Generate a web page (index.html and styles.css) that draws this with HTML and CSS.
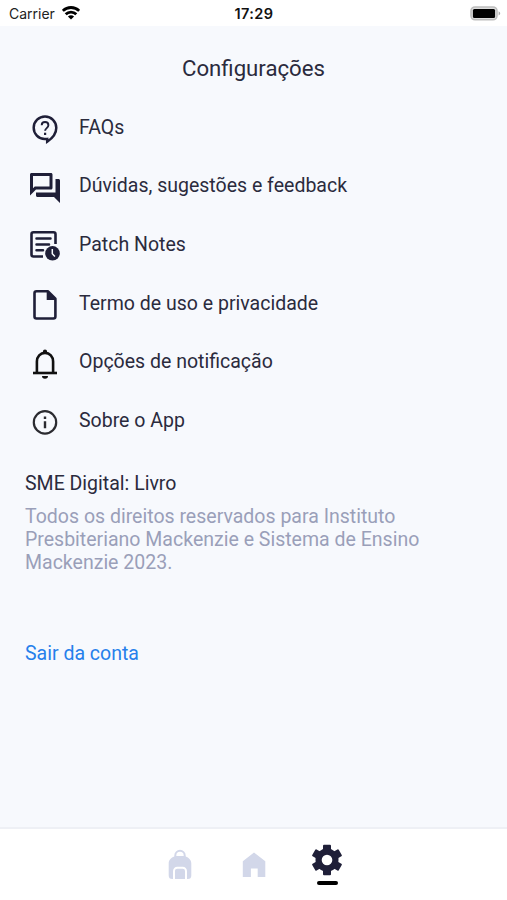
FILE: index.html
```
<!DOCTYPE html>
<html lang="pt-BR">
<head>
  <meta charset="UTF-8">
  <meta name="viewport" content="width=device-width, initial-scale=1.0">
  <title>Configurações</title>
  <link rel="stylesheet" href="styles.css">
</head>
<body>
  <header class="status-bar">
    <div class="carrier">
      <span>Carrier</span>
      <svg width="18" height="14" viewBox="0 0 18 14" fill="none" stroke="#000" stroke-width="2.8">
        <path d="M0.8 4.8a11.8 11.8 0 0 1 16.4 0"/>
        <path d="M3.7 8.3a7.5 7.5 0 0 1 10.6 0"/>
        <path d="M9 13.6L5.9 10.6a4.5 4.5 0 0 1 6.2 0z" fill="#000" stroke="none"/>
      </svg>
    </div>
    <time class="clock">17:29</time>
    <svg class="battery" width="31" height="15" viewBox="0 0 31 15">
      <rect x="1" y="1" width="26" height="12.8" rx="4" fill="#ddd" stroke="#bdbdbd" stroke-width="1.6"/>
      <rect x="2.9" y="2.9" width="22.2" height="9" rx="1.5" fill="#000"/>
      <path d="M28.6 5.3c2.2 1 2.2 3.2 0 4.2z" fill="#a8a8a8"/>
    </svg>
  </header>

  <main class="content">
    <h1 class="title">Configurações</h1>

    <ul class="menu">
      <li class="menu-item">
        <svg class="icon" viewBox="0 0 36 36" fill="none" stroke="#1f1f38" stroke-width="2.5">
          <path d="M20.2 27.9l-2.5.2A11.3 11.3 0 1 1 29.3 16.8c0 5.8-4 10.6-9.1 13.9z"/>
          <path d="M14.7 14.2c0-4.3 6.7-4.3 6.7 0 0 2.9-3.3 2.9-3.3 5.6" stroke-width="1.9"/>
          <path d="M18.1 21.7v2.3" stroke-width="2.2"/>
        </svg>
        <span>FAQs</span>
      </li>
      <li class="menu-item">
        <svg class="icon" viewBox="0 0 24 24" fill="#1f1f38">
          <path d="M15 4v7H5.17L4 12.17V4h11m1-2H3c-.55 0-1 .45-1 1v14l4-4h10c.55 0 1-.45 1-1V3c0-.55-.45-1-1-1zm5 4h-2v9H6v2c0 .55.45 1 1 1h11l4 4V7c0-.55-.45-1-1-1z"/>
        </svg>
        <span>Dúvidas, sugestões e feedback</span>
      </li>
      <li class="menu-item">
        <svg class="icon" viewBox="0 0 36 36" fill="none" stroke="#1f1f38" stroke-width="2.6">
          <path d="M16 28.5H6.5a2 2 0 0 1-2-2V6.3a2 2 0 0 1 2-2h20a2 2 0 0 1 2 2V16"/>
          <path d="M9.5 10.5h14M9.5 16.4h12.5M9.5 22.3h6.5" stroke-width="2.5" stroke-linecap="round"/>
          <circle cx="25.5" cy="25.3" r="7.3" fill="#1f1f38" stroke="none"/>
          <path d="M25.3 21v4.7l2.6 2.7" stroke="#f7f9fd" stroke-width="1.5"/>
        </svg>
        <span>Patch Notes</span>
      </li>
      <li class="menu-item">
        <svg class="icon" viewBox="0 0 36 36" fill="none" stroke="#1f1f38" stroke-width="2.6">
          <path d="M9.5 4.3h11.3l7.6 7.5v17.7a2 2 0 0 1-2 2H9.5a2 2 0 0 1-2-2V6.300a2 2 0 0 1 2-2z" stroke-linejoin="round"/>
          <path d="M19.7 4v9h9z" fill="#1f1f38" stroke="none"/>
        </svg>
        <span>Termo de uso e privacidade</span>
      </li>
      <li class="menu-item">
        <svg class="icon" viewBox="0 0 36 36" fill="none" stroke="#111" stroke-width="2.6">
          <path d="M6 27h24"/>
          <path d="M9.9 27V15.5c0-5 3.4-8.6 8.1-8.6s8.1 3.6 8.1 8.6V27"/>
          <path d="M15.9 7V5.5a2.1 2.1 0 0 1 4.2 0V7zM15 30h6a3 2.7 0 0 1-6 0z" fill="#111" stroke="none"/>
        </svg>
        <span>Opções de notificação</span>
      </li>
      <li class="menu-item">
        <svg class="icon" viewBox="0 0 36 36" fill="none" stroke="#2b2b30" stroke-width="2.2">
          <circle cx="18" cy="18.4" r="11.2"/>
          <path d="M18 17.2v7M18 12.600v2.300" stroke-width="2.4"/>
        </svg>
        <span>Sobre o App</span>
      </li>
    </ul>

    <section class="about">
      <h2 class="about-title">SME Digital: Livro</h2>
      <p class="about-text">Todos os direitos reservados para Instituto Presbiteriano Mackenzie e Sistema de Ensino Mackenzie 2023.</p>
    </section>

    <a class="logout" href="#">Sair da conta</a>
  </main>

  <nav class="tab-bar">
    <a class="tab" href="#" aria-label="Mochila">
      <svg width="26" height="32" viewBox="0 0 26 32">
        <path d="M8.3 9V7.5a4.7 4.7 0 0 1 9.4 0V9" fill="none" stroke="#d2d7e9" stroke-width="2"/>
        <path d="M9 8h8c4.3 1 7.3 3.5 7.3 7.5v12a3.5 3.5 0 0 1-3.5 3.5H5.2a3.5 3.5 0 0 1-3.5-3.5v-12C1.700 11.500 4.700 9 9 8z" fill="#d2d7e9"/>
        <path d="M7 31v-8a3.3 3.3 0 0 1 3.3-3.3h5.4A3.3 3.3 0 0 1 19 23v8" fill="none" stroke="#fff" stroke-width="2"/>
      </svg>
    </a>
    <a class="tab" href="#" aria-label="Início">
      <svg width="26" height="32" viewBox="0 0 26 32">
        <path d="M13 4.5l11.3 8.8V29h-7.6v-8.5H9.9V29H1.8V13.3z" fill="#d2d7e9"/>
      </svg>
    </a>
    <a class="tab tab-active" href="#" aria-label="Configurações">
      <svg width="38" height="38" viewBox="-19 -19 38 38" fill="#1f1f38">
        <circle r="11.5"/>
        <rect x="-4" y="-15.3" width="8" height="30.6" rx="1"/>
        <rect x="-4" y="-15.3" width="8" height="30.6" rx="1" transform="rotate(60)"/>
        <rect x="-4" y="-15.3" width="8" height="30.6" rx="1" transform="rotate(120)"/>
        <circle r="5.3" fill="#fff"/>
      </svg>
    </a>
  </nav>
</body>
</html>
```
FILE: styles.css
```
* {
  box-sizing: border-box;
}
body {
  display: flex;
  flex-direction: column;
  height: 900px;
  margin: 0;
  background-color: #f7f9fd;
  color: #2b2b3d;
  font-family: Roboto, sans-serif;
  overflow: hidden;
}
.status-bar {
  display: grid;
  grid-template-columns: 1fr auto 1fr;
  align-items: center;
  height: 26px;
  padding: 0 6px 0 9px;
  background-color: #fff;
  color: #222;
  font-family: Inter, sans-serif;
  font-size: 14px;
}
.carrier {
  display: flex;
  align-items: center;
  gap: 7px;
}
.clock {
  margin-right: 2px;
  font-size: 14.5px;
  font-weight: 600;
  letter-spacing: 0.4px;
  color: #111;
}
.battery {
  justify-self: end;
}
.content {
  flex: 1;
  padding: 28px 25px 0;
}
.title {
  margin: 0;
  font-size: 22.2px;
  font-weight: 400;
  line-height: 28px;
  text-align: center;
}
.menu {
  margin: 17.5px 0 0;
  padding: 0;
  list-style: none;
}
.menu-item {
  display: flex;
  align-items: center;
  gap: 16px;
  height: 58.7px;
  padding-left: 2px;
  font-size: 19.53px;
}
.menu-item span {
  padding-bottom: 3.5px;
}
.icon {
  width: 36px;
  height: 36px;
}
.about {
  margin-top: 20.5px;
}
.about-title {
  margin: 0 0 9px;
  font-size: 19.53px;
  font-weight: 400;
  line-height: 24px;
}
.about-text {
  margin: 0;
  color: #9a9fb9;
  font-size: 19.53px;
  line-height: 23px;
}
.logout {
  display: block;
  margin-top: 68px;
  color: #2680eb;
  font-size: 19.53px;
  line-height: 23px;
  text-decoration: none;
}
.tab-bar {
  display: flex;
  justify-content: center;
  height: 73px;
  padding-top: 12px;
  border-top: 2px solid #eef0f5;
  background-color: #fff;
}
.tab {
  display: flex;
  flex-direction: column;
  align-items: center;
  width: 73.5px;
  padding-top: 7px;
}
.tab-active {
  padding-top: 0;
}
.tab-active::after {
  content: "";
  width: 21px;
  height: 4px;
  margin-top: 2px;
  border-radius: 2px;
  background-color: #000;
}
```
